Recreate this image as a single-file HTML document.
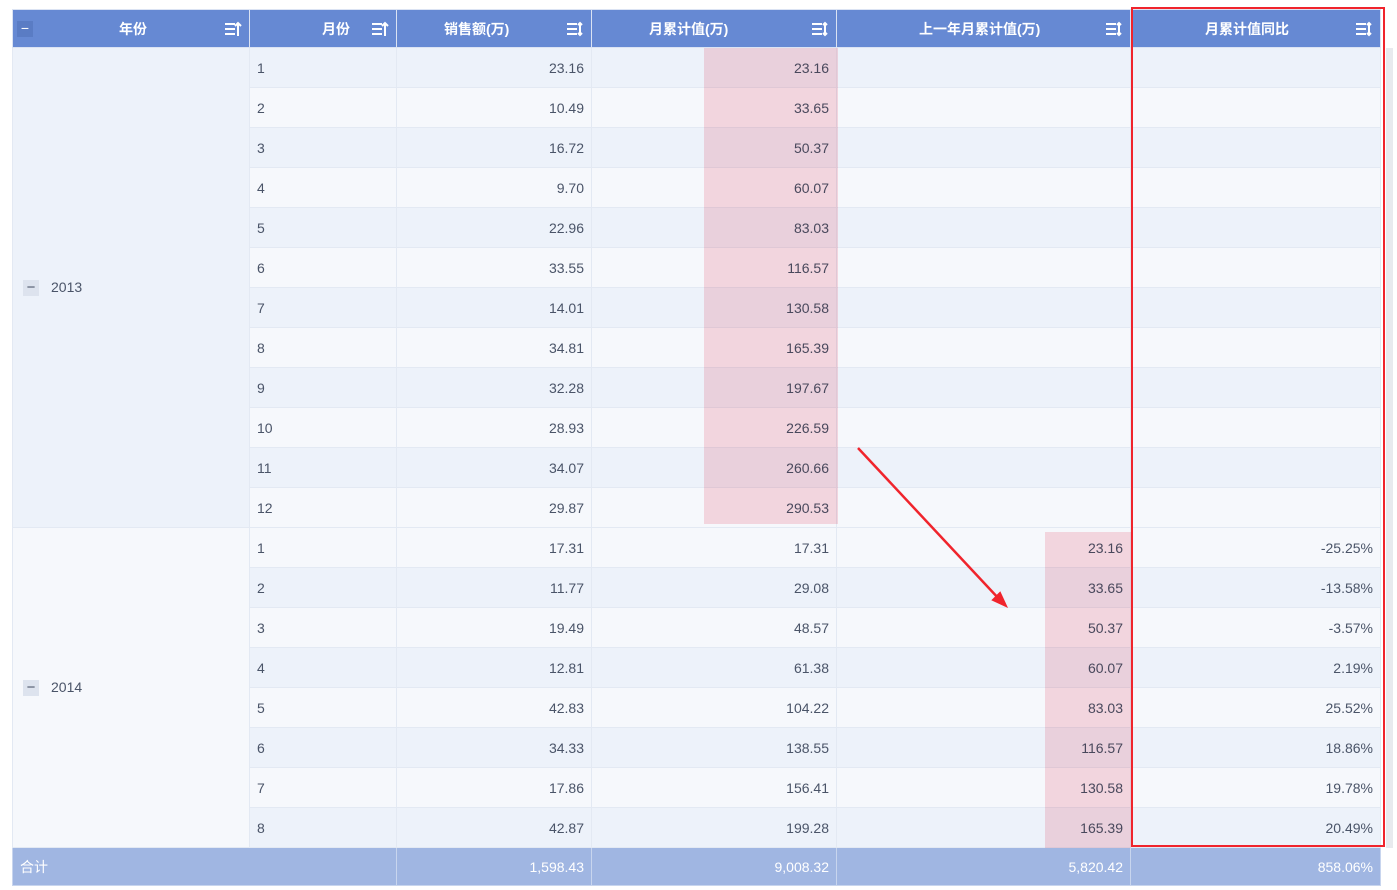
<!DOCTYPE html>
<html><head><meta charset="utf-8"><style>
*{margin:0;padding:0;box-sizing:border-box}
body{width:1397px;height:890px;background:#fff;position:relative;overflow:hidden;font-family:"Liberation Sans","Noto Sans CJK SC",sans-serif;color:#4a5468;font-size:14px}
table{position:absolute;left:12px;top:9px;border-collapse:collapse;table-layout:fixed;width:1368px}
td,th{border:1px solid #e3e9f3;height:40px;padding:0 7px;white-space:nowrap}
th{background:#6689d3;color:#fff;font-weight:bold;height:38px;border-color:#dbe3f3;position:relative;font-size:14px;text-align:left}
td.n{text-align:right}
tr.a td{background:#edf2fa}
tr.b td{background:#f6f8fc}
td.y1{background:#edf2fa!important}
td.y2{background:#f6f8fc!important}
tr.f td{background:#a0b6e2;color:#fff;height:38px;border-color:#c8d5ee}
.ic{position:absolute;right:7px;top:11px}
.m{display:inline-block;width:16px;height:16px;background:#dde3ee;color:#4a5468;text-align:center;line-height:15px;font-size:15px;margin:0 12px 0 3px;vertical-align:middle}
.pk{position:absolute;background:#fbdbe1;mix-blend-mode:multiply}
</style></head><body>
<table>
<colgroup><col style="width:237px"><col style="width:147px"><col style="width:195px"><col style="width:245px"><col style="width:294px"><col style="width:250px"></colgroup>
<tr>
<th style="padding-left:106px"><span style="position:absolute;left:4px;top:11px;width:16px;height:16px;background:#5a7cc4;line-height:15px;font-weight:normal;text-align:center">−</span>年份<svg class="ic" width="18" height="16" viewBox="0 0 18 16"><path d="M1 3h10M1 8h10M1 13h10M14 15V2M11 5l3-3 3 3" stroke="#fff" stroke-width="2" fill="none"/></svg></th>
<th style="padding-left:72px">月份<svg class="ic" width="18" height="16" viewBox="0 0 18 16"><path d="M1 3h10M1 8h10M1 13h10M14 15V2M11 5l3-3 3 3" stroke="#fff" stroke-width="2" fill="none"/></svg></th>
<th style="padding-left:47px">销售额(万)<svg class="ic" width="18" height="16" viewBox="0 0 18 16"><path d="M1 3h10M1 8h10M1 13h10M14 2v12M12 4l2-2 2 2M12 12l2 2 2-2" stroke="#fff" stroke-width="2" fill="none"/></svg></th>
<th style="padding-left:57px">月累计值(万)<svg class="ic" width="18" height="16" viewBox="0 0 18 16"><path d="M1 3h10M1 8h10M1 13h10M14 2v12M12 4l2-2 2 2M12 12l2 2 2-2" stroke="#fff" stroke-width="2" fill="none"/></svg></th>
<th style="padding-left:82px">上一年月累计值(万)<svg class="ic" width="18" height="16" viewBox="0 0 18 16"><path d="M1 3h10M1 8h10M1 13h10M14 2v12M12 4l2-2 2 2M12 12l2 2 2-2" stroke="#fff" stroke-width="2" fill="none"/></svg></th>
<th style="padding-left:74px">月累计值同比<svg class="ic" width="18" height="16" viewBox="0 0 18 16"><path d="M1 3h10M1 8h10M1 13h10M14 2v12M12 4l2-2 2 2M12 12l2 2 2-2" stroke="#fff" stroke-width="2" fill="none"/></svg></th>
</tr>
<tr class="a"><td rowspan="12" class="y1"><span class="m">−</span>2013</td><td>1</td><td class="n">23.16</td><td class="n">23.16</td><td></td><td></td></tr>
<tr class="b"><td>2</td><td class="n">10.49</td><td class="n">33.65</td><td></td><td></td></tr>
<tr class="a"><td>3</td><td class="n">16.72</td><td class="n">50.37</td><td></td><td></td></tr>
<tr class="b"><td>4</td><td class="n">9.70</td><td class="n">60.07</td><td></td><td></td></tr>
<tr class="a"><td>5</td><td class="n">22.96</td><td class="n">83.03</td><td></td><td></td></tr>
<tr class="b"><td>6</td><td class="n">33.55</td><td class="n">116.57</td><td></td><td></td></tr>
<tr class="a"><td>7</td><td class="n">14.01</td><td class="n">130.58</td><td></td><td></td></tr>
<tr class="b"><td>8</td><td class="n">34.81</td><td class="n">165.39</td><td></td><td></td></tr>
<tr class="a"><td>9</td><td class="n">32.28</td><td class="n">197.67</td><td></td><td></td></tr>
<tr class="b"><td>10</td><td class="n">28.93</td><td class="n">226.59</td><td></td><td></td></tr>
<tr class="a"><td>11</td><td class="n">34.07</td><td class="n">260.66</td><td></td><td></td></tr>
<tr class="b"><td>12</td><td class="n">29.87</td><td class="n">290.53</td><td></td><td></td></tr>
<tr class="b"><td rowspan="8" class="y2"><span class="m">−</span>2014</td><td>1</td><td class="n">17.31</td><td class="n">17.31</td><td class="n">23.16</td><td class="n">-25.25%</td></tr>
<tr class="a"><td>2</td><td class="n">11.77</td><td class="n">29.08</td><td class="n">33.65</td><td class="n">-13.58%</td></tr>
<tr class="b"><td>3</td><td class="n">19.49</td><td class="n">48.57</td><td class="n">50.37</td><td class="n">-3.57%</td></tr>
<tr class="a"><td>4</td><td class="n">12.81</td><td class="n">61.38</td><td class="n">60.07</td><td class="n">2.19%</td></tr>
<tr class="b"><td>5</td><td class="n">42.83</td><td class="n">104.22</td><td class="n">83.03</td><td class="n">25.52%</td></tr>
<tr class="a"><td>6</td><td class="n">34.33</td><td class="n">138.55</td><td class="n">116.57</td><td class="n">18.86%</td></tr>
<tr class="b"><td>7</td><td class="n">17.86</td><td class="n">156.41</td><td class="n">130.58</td><td class="n">19.78%</td></tr>
<tr class="a"><td>8</td><td class="n">42.87</td><td class="n">199.28</td><td class="n">165.39</td><td class="n">20.49%</td></tr>
<tr class="f"><td colspan="2">合计</td><td class="n">1,598.43</td><td class="n">9,008.32</td><td class="n">5,820.42</td><td class="n">858.06%</td></tr>
</table>
<div class="pk" style="left:704px;top:48px;width:134px;height:476px"></div>
<div class="pk" style="left:1045px;top:532px;width:86px;height:316px"></div>
<div style="position:absolute;left:1131px;top:7px;width:254px;height:840px;border:2px solid #f0242c"></div>
<div style="position:absolute;left:1386px;top:48px;width:7px;height:800px;background:#e8eaee"></div>
<svg style="position:absolute;left:0;top:0" width="1397" height="890"><path d="M858 448L1000 600" stroke="#f0242c" stroke-width="2.5"/><path d="M1006 606L993 600L1000 593Z" fill="#f0242c" stroke="#f0242c" stroke-width="2"/></svg>
</body></html>
